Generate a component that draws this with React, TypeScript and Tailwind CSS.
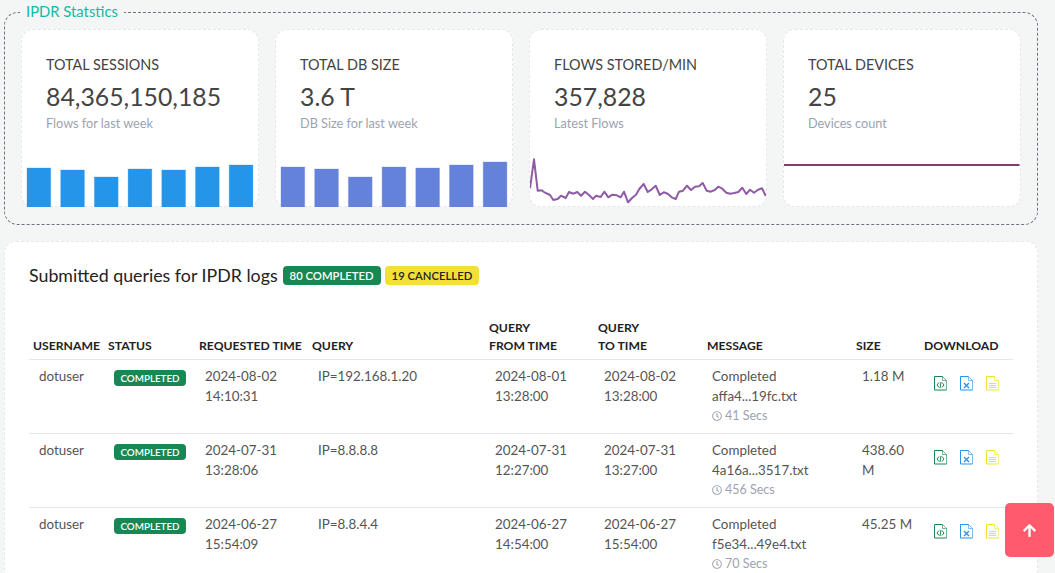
import { FaArrowUp, FaRegClock } from 'react-icons/fa'

const font = { fontFamily: 'Lato, "Noto Sans", sans-serif' }

const sparkPoints = [
  [15, 145], [27, 58], [38, 152], [50, 151], [60, 158], [75, 165], [85, 180], [98, 177], [108, 167], [122, 174],
  [132, 156], [145, 161], [157, 156], [168, 167], [180, 155], [192, 165], [204, 177], [213, 167], [227, 171], [238, 155],
  [250, 172], [262, 164], [275, 166], [287, 172], [297, 155], [309, 187], [322, 173], [333, 164], [343, 147], [356, 132],
  [368, 156], [380, 148], [392, 137], [404, 165], [416, 157], [428, 161], [440, 172], [452, 177], [462, 155], [474, 152],
  [486, 137], [498, 150], [510, 140], [522, 139], [533, 129], [545, 152], [557, 155], [569, 150], [580, 140], [592, 146],
  [604, 158], [616, 161], [628, 159], [640, 156], [652, 143], [664, 162], [675, 149], [687, 158], [699, 149], [711, 145],
  [722, 168],
]
  .map(([x, y]) => `${(x / 3 - 5).toFixed(1)},${(y / 3 - 7).toFixed(1)}`)
  .join(' ')

function Bars({ color, tops }: { color: string; tops: number[] }) {
  return (
    <svg width="235.5" height="60" viewBox="0 0 235.5 60" className="block">
      {tops.map((top, i) => (
        <rect key={i} x={5 + i * 33.7} y={top - 147} width="23.7" height={207 - top} fill={color} stroke={color} strokeOpacity="0.3" />
      ))}
    </svg>
  )
}

function Spark() {
  return (
    <svg width="235.5" height="60" viewBox="0 0 235.5 60" className="block">
      <polyline points={sparkPoints} fill="none" stroke="#8f5ba6" strokeWidth="2" strokeLinejoin="round" />
    </svg>
  )
}

function FlatLine() {
  return (
    <svg width="235.5" height="60" viewBox="0 0 235.5 60" className="block">
      <line x1="0" y1="18" x2="235.5" y2="18" stroke="#8e3a68" strokeWidth="2" />
    </svg>
  )
}

// page outline shared by the three download icons
function FileIcon({ color, children }: { color: string; children: React.ReactNode }) {
  return (
    <svg width="13" height="15" viewBox="0 0 13 15" fill="none" stroke={color} className="block shrink-0">
      <path d="M8.5 .5H.5v13.5h12" />
      <path d="M8.5 .5l4 4v9.5M8.5 .5v4h4" strokeOpacity="0.6" />
      {children}
    </svg>
  )
}

const stats = [
  { title: 'TOTAL SESSIONS', value: '84,365,150,185', sub: 'Flows for last week', chart: <Bars color="#2595ea" tops={[168, 170, 177, 169, 170, 167, 165]} /> },
  { title: 'TOTAL DB SIZE', value: '3.6 T', sub: 'DB Size for last week', chart: <Bars color="#6582da" tops={[167, 169, 177, 167, 168, 165, 162]} /> },
  { title: 'FLOWS STORED/MIN', value: '357,828', sub: 'Latest Flows', chart: <Spark /> },
  { title: 'TOTAL DEVICES', value: '25', sub: 'Devices count', chart: <FlatLine /> },
]

const rows = [
  { user: 'dotuser', req: ['2024-08-02', '14:10:31'], query: 'IP=192.168.1.20', from: ['2024-08-01', '13:28:00'], to: ['2024-08-02', '13:28:00'], file: 'affa4...19fc.txt', secs: '41 Secs', size: '1.18 M' },
  { user: 'dotuser', req: ['2024-07-31', '13:28:06'], query: 'IP=8.8.8.8', from: ['2024-07-31', '12:27:00'], to: ['2024-07-31', '13:27:00'], file: '4a16a...3517.txt', secs: '456 Secs', size: '438.60 M' },
  { user: 'dotuser', req: ['2024-06-27', '15:54:09'], query: 'IP=8.8.4.4', from: ['2024-06-27', '14:54:00'], to: ['2024-06-27', '15:54:00'], file: 'f5e34...49e4.txt', secs: '70 Secs', size: '45.25 M' },
]

const th = 'px-1 pb-[4px] align-bottom text-left text-[12.2px] leading-[18px] font-bold text-[#222]'
const td = 'pl-[10px] pr-1 pt-[6px] align-top'

function TwoLines({ lines }: { lines: string[] }) {
  return (
    <>
      {lines[0]}
      <br />
      {lines[1]}
    </>
  )
}

export default function App() {
  return (
    <div style={font} className="relative h-screen overflow-hidden bg-[#f4f6f6] px-1 pt-[1px]">
      <fieldset className="w-[1034px] rounded-[14px] border border-dashed border-[#6b7280] pt-[6px] pr-[16px] pb-[17px] pl-[16px]">
        <legend className="ml-[-1px] px-[6px] pb-[2px] text-[14.8px] leading-[20px] text-[#14b8a6]">IPDR Statstics</legend>
        <div className="grid grid-cols-[repeat(4,237.5px)] gap-[16.5px]">
          {stats.map(s => (
            <div key={s.title} className="h-[178px] rounded-[12px] border border-dashed border-[#e5e7eb] bg-white">
              <div className="h-[117px] px-[24px] pt-[25px]">
                <div className="text-[14.4px] leading-[20px] text-[#444]">{s.title}</div>
                <div className="mt-[6px] text-[24.8px] leading-[32px] text-[#444]">{s.value}</div>
                <div className="mt-[1px] text-[12.7px] leading-[18px] text-[#9ca3af]">{s.sub}</div>
              </div>
              {s.chart}
            </div>
          ))}
        </div>
      </fieldset>

      <div className="mt-[16px] h-[400px] w-[1034px] rounded-[12px] border border-dashed border-[#e5e7eb] bg-white px-[24px] pt-[21px]">
        <div className="flex items-center gap-[4px]">
          <h2 className="mr-[1px] text-[17.8px] leading-[24px] text-[#222]">Submitted queries for IPDR logs</h2>
          <span className="rounded-[4px] bg-[#198754] px-[7px] text-[11.3px] leading-[19px] font-semibold text-white">80 COMPLETED</span>
          <span className="rounded-[4px] bg-[#f2e035] px-[7px] text-[11.3px] leading-[19px] font-semibold text-[#222]">19 CANCELLED</span>
        </div>

        <table className="mt-[32px] w-[984px] table-fixed border-collapse">
          <colgroup>
            <col className="w-[75px]" />
            <col className="w-[91px]" />
            <col className="w-[113px]" />
            <col className="w-[177px]" />
            <col className="w-[109px]" />
            <col className="w-[109px]" />
            <col className="w-[149px]" />
            <col className="w-[68px]" />
            <col className="w-[93px]" />
          </colgroup>
          <thead>
            <tr className="border-b border-[#e5e7eb]">
              <th className={th}>USERNAME</th>
              <th className={th}>STATUS</th>
              <th className={th}>REQUESTED TIME</th>
              <th className={th}>QUERY</th>
              <th className={th}>QUERY<br />FROM TIME</th>
              <th className={th}>QUERY<br />TO TIME</th>
              <th className={th}>MESSAGE</th>
              <th className={th}>SIZE</th>
              <th className={th}>DOWNLOAD</th>
            </tr>
          </thead>
          <tbody className="text-[13.4px] leading-[20px] text-[#555]">
            {rows.map(r => (
              <tr key={r.req[1]} className="h-[74px] border-b border-[#e5e7eb]">
                <td className={td}>{r.user}</td>
                <td className={td}>
                  <span className="mt-[4px] block w-[72px] rounded-[4px] bg-[#198754] text-center text-[9.8px] leading-[16px] font-semibold text-white">COMPLETED</span>
                </td>
                <td className={td}><TwoLines lines={r.req} /></td>
                <td className={td}>{r.query}</td>
                <td className={td}><TwoLines lines={r.from} /></td>
                <td className={td}><TwoLines lines={r.to} /></td>
                <td className="pt-[6px] pr-1 pl-[9px] align-top">
                  Completed
                  <br />
                  {r.file}
                  <div className="flex items-center gap-[3px] text-[12.5px] leading-[19px] text-[#9ca3af]">
                    <FaRegClock className="size-[10px]" />
                    {r.secs}
                  </div>
                </td>
                <td className={td}>{r.size}</td>
                <td className={td}>
                  <div className="mt-[10px] flex gap-[13px] pl-[4px]">
                    <FileIcon color="#198754">
                      <path d="M5 6.5L3 9l2 2.5M8 6.5L10 9l-2 2.5M7 6l-1 6" />
                    </FileIcon>
                    <FileIcon color="#2595ea">
                      <path d="M4 7l5 5M9 7l-5 5" strokeWidth="1.3" />
                    </FileIcon>
                    <FileIcon color="#f2e035">
                      <path d="M3 7.5h7M3 9.5h7M3 11.5h7" />
                    </FileIcon>
                  </div>
                </td>
              </tr>
            ))}
          </tbody>
        </table>
      </div>

      <button className="absolute top-[503px] left-[1005px] flex h-[54px] w-[49px] items-center justify-center rounded-[5px] bg-[#ff5a6e] text-white">
        <FaArrowUp className="size-[15px]" />
      </button>
    </div>
  )
}
